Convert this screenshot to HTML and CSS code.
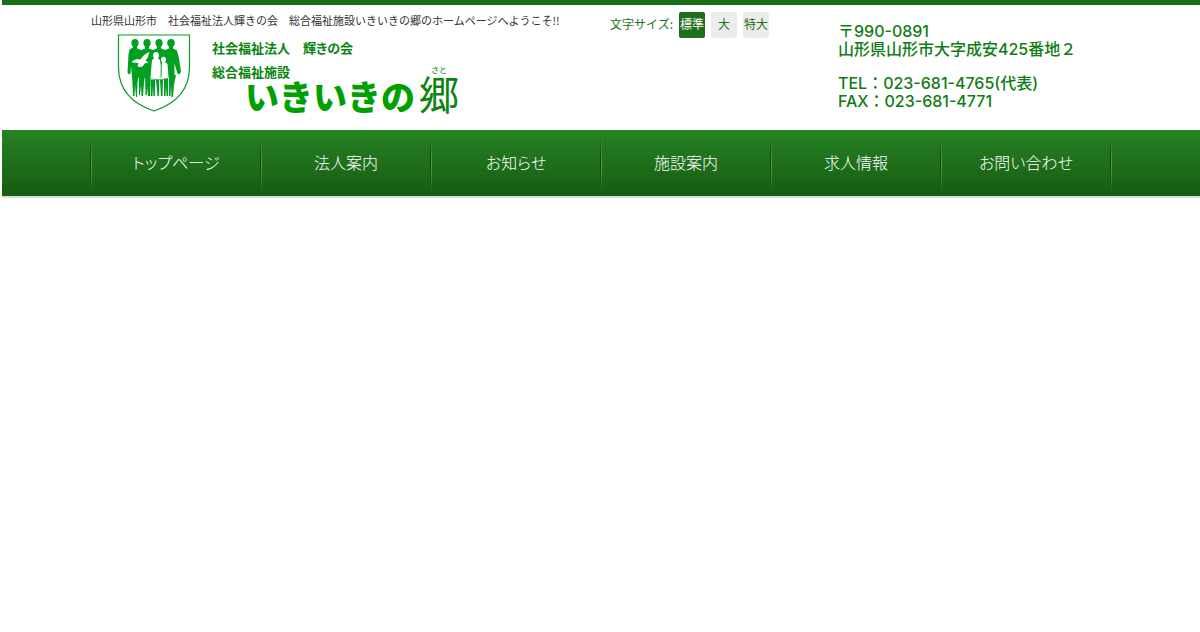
FILE: index.html
```html
<!DOCTYPE html>
<html lang="ja">
  <head>
    <meta charset="utf-8">
    <title>総合福祉施設いきいきの郷</title>
    <link rel="stylesheet" href="styles.css">
  </head>
  <body>
    <header class="header">
      <div class="inner header-inner">
        <div class="header-left">
          <h1>山形県山形市　社会福祉法人輝きの会　総合福祉施設いきいきの郷のホームページへようこそ!!</h1>
          <a class="logo" href="index.html">
            <svg class="emblem" viewBox="7 4 74 78" width="74" height="78" aria-hidden="true">
              <path d="M8.500 5H79.500V37C79.500 61 65 74 44 81C23 74 8.500 61 8.500 37Z" fill="#fff" stroke="#0a9a20" stroke-width="1.200"/>
              <g fill="#00a020">
                <ellipse cx="25" cy="13" rx="3.600" ry="4"/>
                <ellipse cx="37" cy="13" rx="3.600" ry="4"/>
                <ellipse cx="49" cy="13" rx="3.600" ry="4"/>
                <ellipse cx="61" cy="13" rx="3.800" ry="4"/>
                <path d="M23 16h4v2.500l4 1.500 4-1.500V16h4v2.500l4 1.500 4-1.500V16h4v2.500l4 1.500 4-1.500V16h4v2.500l4 2 2 8 2 13-1.500 3-2-1-3-10v14H22l-1-12-.5 8-1.500 1-1.500-2 1-18 1-5 3.500-2z"/>
                <path d="M22 44h7l-1.500 9-.5 14h-1l-1-12-.5 11h-1.500zM29 45h6l-1 8-1 13h-1.500l-.5-11-1 10h-1zM35 45h6l-1 21H38l-.5-9-.5 8h-1.500zM41 49h4v17h-1.500L43 57l-.5 9H41zM46 50h3v16h-1.500zM50 50h3l-.5 16H51zM54 49h4v17h-1.500l-.5-10-.5 10H54zM59 45h7l-2 10-1 12h-1.500L61 55l-.5 11H59z"/>
              </g>
              <g fill="#fff">
                <ellipse cx="46" cy="25.500" rx="2.900" ry="3.400"/>
                <ellipse cx="53.500" cy="29.500" rx="2.500" ry="2.800"/>
                <path d="M44.500 28h3l2.500 2 .8 6-.3 14H41l-.5-2 1-13 .5-5z"/>
                <path d="M52 32h3l2.500 2 1 13-1.500 2h-5.500l.3-14z"/>
                <path d="M22 32.500c0-2 2-2.500 5-3.500l3.500.5c2-3.500 5-6 9-7.500l-2 6-2 2.500 3 2-4 1c-1 3.500-4 4-7 3l1-3.500z"/>
              </g>
              <path d="M41 49l8 .8 9-1.300" fill="none" stroke="#00a020" stroke-width=".8"/>
            </svg>
            <span class="logo-text">
              <span class="logo-line">社会福祉法人　輝きの会</span>
              <span class="logo-line">総合福祉施設</span>
              <span class="logo-name">
                <span class="brush">いきいきの</span>
                <span class="sato"><small>さと</small><span>郷</span></span>
              </span>
            </span>
          </a>
        </div>
        <div class="font-size">
          <span>文字サイズ:</span>
          <button type="button" class="active">標準</button>
          <button type="button">大</button>
          <button type="button">特大</button>
        </div>
        <address>
          <p>〒990-0891<br>山形県山形市大字成安425番地２</p>
          <p>TEL：023-681-4765(代表)<br>FAX：023-681-4771</p>
        </address>
      </div>
    </header>
    <nav>
      <ul>
        <li><a href="index.html">トップページ</a></li>
        <li><a href="houjin.html">法人案内</a></li>
        <li><a href="news.html">お知らせ</a></li>
        <li><a href="shisetsu.html">施設案内</a></li>
        <li><a href="recruit.html">求人情報</a></li>
        <li><a href="contact.html">お問い合わせ</a></li>
      </ul>
    </nav>
  </body>
</html>
```

FILE: styles.css
```css
* {
  box-sizing: border-box;
}
body {
  margin: 0 0 0 2px;
  background-color: #fff;
  color: #333;
  font-family: "Noto Sans CJK JP", sans-serif;
  font-size: 12px;
}
.inner {
  max-width: 1020px;
  margin: 0 auto;
}

/* header */
.header {
  border-top: 5px solid #1a6e18;
}
.header-inner {
  display: grid;
  grid-template-columns: 519px 228px 1fr;
  min-height: 125px;
}
h1 {
  margin: 7px 0 0;
  font-size: 11px;
  font-weight: normal;
  line-height: 16px;
}
.logo {
  display: flex;
  gap: 21px;
  margin-left: 26px;
  padding-top: 6px;
  color: #0a850f;
  text-decoration: none;
}
.emblem {
  flex: none;
}
.logo-text {
  padding-top: 2px;
}
.logo-line {
  display: block;
  font-size: 13px;
  font-weight: bold;
  line-height: 24px;
  font-feature-settings: "palt";
}
.logo-name {
  display: flex;
  align-items: flex-end;
  gap: 4px;
  margin: -18px 0 0 33px;
  color: #00a000;
}
.brush {
  font-size: 34px;
  font-weight: 900;
  line-height: 32px;
}
.sato {
  display: flex;
  flex-direction: column;
  align-items: center;
  color: #0a850f;
  font-size: 40px;
  font-weight: normal;
  line-height: 38px;
}
.sato small {
  font-size: 8px;
  line-height: 8px;
}

.font-size {
  display: flex;
  align-items: flex-start;
  gap: 6px;
  padding-top: 7px;
  color: #1f701c;
  line-height: 24px;
}
.font-size button {
  width: 26px;
  height: 26px;
  padding: 0 0 2px;
  border: 0;
  border-radius: 2px;
  background-color: #ececec;
  color: #1f701c;
  font: inherit;
}
.font-size button.active {
  background-color: #1f701c;
  color: #fff;
}

address {
  padding-top: 17px;
  color: #0f7d12;
  font-family: Inter, "Noto Sans CJK JP", sans-serif;
  font-size: 16px;
  font-style: normal;
  font-weight: 500;
  line-height: 18px;
}
address p {
  margin: 0 0 16px;
}

/* navigation */
nav {
  border-bottom: 2px solid #d5e0d5;
  background-image: linear-gradient(#278223, #165c12);
}
nav ul {
  display: flex;
  max-width: 1022px;
  margin: 0 auto;
  padding: 0 1px;
  list-style: none;
  background-image: linear-gradient(transparent 10%, #0b3d09, transparent 90%),
    linear-gradient(transparent 10%, #5a9f57, transparent 95%);
  background-position: left, right;
  background-repeat: no-repeat;
  background-size: 1px 100%;
}
nav li {
  flex: 1;
  background-image: linear-gradient(transparent 10%, #5a9f57, transparent 95%),
    linear-gradient(transparent 10%, #0b3d09, transparent 90%);
  background-position: left, right;
  background-repeat: no-repeat;
  background-size: 1px 100%;
}
nav a {
  display: block;
  padding-bottom: 2px;
  color: #fff;
  font-size: 16px;
  font-weight: 300;
  line-height: 64px;
  text-align: center;
  text-decoration: none;
  font-feature-settings: "palt";
}
```
